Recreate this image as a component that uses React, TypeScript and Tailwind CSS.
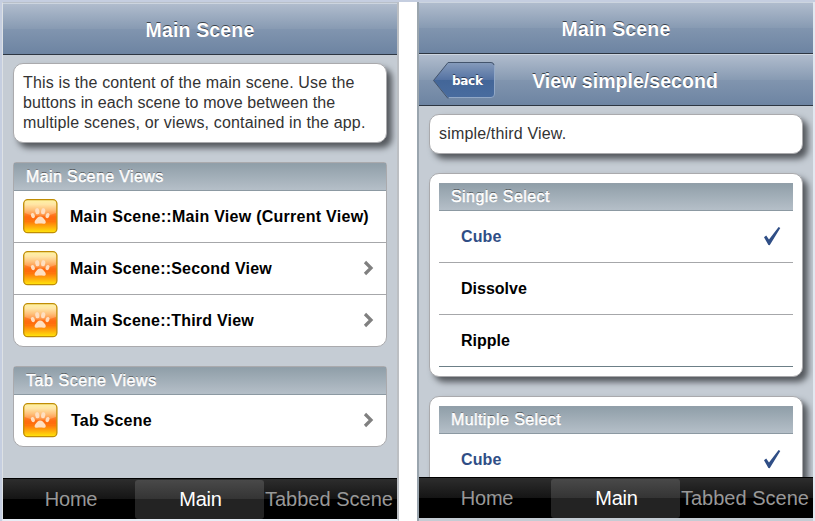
import React from "react";

function TitleBar({ title, tracking = "", back = false }: { title: string; tracking?: string; back?: boolean }) {
  return (
    <header
      className={`relative flex h-[52px] shrink-0 items-center justify-center border-t border-b border-t-[#cdd5df] border-b-[#2d3642] bg-[linear-gradient(#b0bccd_0%,#889bb3_49%,#8195af_50%,#6d84a2_100%)] pt-[3px] pb-[2px] ${back ? "pl-[18px]" : ""}`}
    >
      {back && (
        <svg className="absolute top-[6px] left-[13px]" width="64" height="40" viewBox="0 0 64 40">
          <defs>
            <linearGradient id="back" x1="0" y1="0" x2="0" y2="1">
              <stop offset="0" stopColor="#869bbb" />
              <stop offset=".49" stopColor="#5573a3" />
              <stop offset=".5" stopColor="#436698" />
              <stop offset="1" stopColor="#496c9f" />
            </linearGradient>
          </defs>
          <path d="M16 1.5H59Q62.500 1.500 62.500 5V33Q62.500 36.500 59 36.500H16L1.500 19.500Z" fill="url(#back)" />
          <path d="M62.500 5V33Q62.500 36.500 59 36.500H17" fill="none" stroke="#92a8c6" />
          <path d="M16 37.500L1.500 19.500L16 1.500H59Q61.500 1.500 62 4" fill="none" stroke="#43546c" />
        </svg>
      )}
      {back && (
        <span className="absolute top-[18px] left-[33px] font-['DejaVu_Sans',sans-serif] text-[12px] leading-[16px] font-bold tracking-[-0.3px] text-white [text-shadow:0_-1px_0_#30415d]">
          back
        </span>
      )}
      <h1 className={`pt-px text-[19.5px] leading-6 font-bold text-white [text-shadow:0_-1px_0_rgba(0,0,0,0.6)] ${tracking}`}>{title}</h1>
    </header>
  );
}

function Card({ children }: { children: React.ReactNode }) {
  return (
    <section className="shrink-0 rounded-[10px] border border-[#aaaaad] bg-white p-[9px] shadow-[5px_5px_6px_#54585d]">{children}</section>
  );
}

function GroupHeader({ title, tracking = "" }: { title: string; tracking?: string }) {
  return (
    <h2
      className={`h-7 border-t border-b border-t-[#929fa9] border-b-[#8c99a2] bg-[linear-gradient(#909fa9,#b5bfc8)] pl-3 text-[16px] leading-[26px] text-white [-webkit-text-stroke:0.5px_white] [text-shadow:0_-1px_0_rgba(0,0,0,0.6)] ${tracking}`}
    >
      {title}
    </h2>
  );
}

function Paw() {
  return (
    <svg className="ml-[9px] shrink-0" width="35" height="35" viewBox="0 0 35 35">
      <defs>
        <linearGradient id="amber" x1="0" y1="0" x2="0" y2="1">
          <stop offset="0" stopColor="#fff3a0" />
          <stop offset=".14" stopColor="#ffe6a6" />
          <stop offset=".3" stopColor="#ffc27c" />
          <stop offset=".45" stopColor="#ff984c" />
          <stop offset=".52" stopColor="#ff7416" />
          <stop offset=".66" stopColor="#ff760b" />
          <stop offset="1" stopColor="#ffe80c" />
        </linearGradient>
      </defs>
      <rect x=".7" y=".7" width="33.2" height="33" rx="4" fill="url(#amber)" stroke="#c08d05" strokeWidth="1.3" />
      <path d="M1.500 14Q17 21 33 14V21H1.500Z" fill="#ff680c" opacity=".6" />
      <g fill="#ffdfc0">
        <path d="M17.200 17.600C19.200 17.600 20.500 19.300 21.900 21C23.600 23.200 22.600 25.200 20.400 24.800C18.200 24.400 16.200 24.400 14 24.800C11.800 25.200 10.800 23.200 12.500 21C13.900 19.300 15.200 17.600 17.200 17.600Z" />
        <ellipse cx="14.300" cy="12.200" rx="2.100" ry="3.100" transform="rotate(-8 14.300 12.200)" />
        <ellipse cx="20.200" cy="12.200" rx="2.100" ry="3.100" transform="rotate(8 20.200 12.200)" />
        <ellipse cx="9.900" cy="16.600" rx="1.900" ry="2.700" transform="rotate(-22 9.900 16.600)" />
        <ellipse cx="24.500" cy="16.600" rx="1.900" ry="2.700" transform="rotate(22 24.500 16.600)" />
      </g>
    </svg>
  );
}

function Group({ title, tracking = "", items }: { title: string; tracking?: string; items: { label: string; arrow: boolean; style: string }[] }) {
  return (
    <section className="shrink-0 rounded-t-[3px] rounded-b-[10px] border border-[#aaaaad] bg-white">
      <GroupHeader title={title} tracking={tracking} />
      <ul>
        {items.map((it) => (
          <li key={it.label} className="flex h-[52px] items-center border-b border-[#a6a7aa] last:h-[51px] last:border-b-0">
            <Paw />
            <span className={`ml-3 flex-1 text-[16px] leading-5 font-bold whitespace-nowrap text-black ${it.style}`}>{it.label}</span>
            {it.arrow && (
              <svg className="mr-[12px] mb-[2px]" width="11" height="16" viewBox="0 0 11 16">
                <path d="M2 2L8 8L2 14" fill="none" stroke="#808080" strokeWidth="3.200" />
              </svg>
            )}
          </li>
        ))}
      </ul>
    </section>
  );
}

function SelectList({ title, tracking = "", items, checked }: { title: string; tracking?: string; items: string[]; checked: string }) {
  return (
    <Card>
      <GroupHeader title={title} tracking={tracking} />
      <ul>
        {items.map((label) => (
          <li key={label} className="flex h-[52px] items-center justify-between border-b border-[#a6a7aa] pr-3 pl-[22px] last:border-[#6c7f87]">
            <span className={`text-[16px] leading-5 font-bold ${label === checked ? "tracking-[0.1px] text-[#2f4e86]" : "text-black"}`}>{label}</span>
            {label === checked && (
              <svg className="mb-[2px]" width="18" height="20" viewBox="0 0 18 20">
                <path d="M1 11.200L3.200 9.500L6 13.500L15.600 .9L17.300 2.100L6.700 19.300L5.400 19Z" fill="#2f4e86" />
              </svg>
            )}
          </li>
        ))}
      </ul>
    </Card>
  );
}

function TabBar({ position }: { position: string }) {
  return (
    <nav
      className={`absolute inset-x-0 flex h-[41px] border-t border-black bg-[linear-gradient(#2d2d2d_0%,#151515_49%,#000_50%,#000_100%)] text-[20px] leading-[40px] text-[#989898] ${position}`}
    >
      <span className="w-[132px] pl-[4px] text-center tracking-[-0.2px]">Home</span>
      <span className="mt-px w-[129px] rounded-[3px] bg-[linear-gradient(#494949_0%,#343434_49%,#232323_50%,#232323_100%)] pl-[2px] text-center leading-[38px] tracking-[-0.2px] text-white">
        Main
      </span>
      <span className="flex-1 pl-px whitespace-nowrap">Tabbed Scene</span>
    </nav>
  );
}

export default function App() {
  return (
    <div className="flex h-[521px] w-[815px] overflow-hidden border-t-2 border-[#c5cee0] bg-white font-['Liberation_Sans',Arial,sans-serif]">
      <div className="w-[2px] bg-[#c5cee0]" />
      <div className="relative flex w-[397px] flex-col border-t border-r-2 border-b-2 border-l border-t-[#b9c0c9] border-r-[#bcbfc3] border-b-[#e8edf5] border-l-[#dde1e5] bg-[#c5ccd4]">
        <TitleBar title="Main Scene" tracking="tracking-[0.15px]" />
        <main className="flex flex-1 flex-col gap-[19px] overflow-hidden px-[10px] pt-[8px]">
          <Card>
            <p className="text-[16px] leading-5 whitespace-nowrap text-[#333]">
              <span className="tracking-[0.15px]">This is the content of the main scene. Use the</span>
              <br />
              <span className="tracking-[0.09px]">buttons in each scene to move between the</span>
              <br />
              <span className="tracking-[0.15px]">multiple scenes, or views, contained in the app.</span>
            </p>
          </Card>
          <Group
            title="Main Scene Views"
            tracking="tracking-[0.4px]"
            items={[
              { label: "Main Scene::Main View (Current View)", arrow: false, style: "tracking-[0.27px]" },
              { label: "Main Scene::Second View", arrow: true, style: "tracking-[0.21px]" },
              { label: "Main Scene::Third View", arrow: true, style: "tracking-[0.21px]" },
            ]}
          />
          <Group title="Tab Scene Views" tracking="tracking-[0.55px]" items={[{ label: "Tab Scene", arrow: true, style: "pl-px tracking-[0.22px]" }]} />
        </main>
        <TabBar position="top-[475px]" />
      </div>
      <div className="w-[18px] bg-white" />
      <div className="relative flex w-[396px] flex-col overflow-hidden border-l-2 border-l-[#9aa5ae] bg-[#c5ccd4]">
        <TitleBar title="Main Scene" tracking="tracking-[0.15px]" />
        <TitleBar title="View simple/second" tracking="tracking-[0.04px]" back />
        <main className="flex flex-1 flex-col gap-[19px] px-[10px] pt-[8px]">
          <Card>
            <p className="text-[16px] leading-5 tracking-[0.17px] text-[#333]">simple/third View.</p>
          </Card>
          <SelectList title="Single Select" tracking="tracking-[0.42px]" items={["Cube", "Dissolve", "Ripple"]} checked="Cube" />
          <SelectList title="Multiple Select" tracking="tracking-[0.4px]" items={["Cube"]} checked="Cube" />
        </main>
        <TabBar position="top-[475px]" />
      </div>
      <div className="flex-1 bg-[#e3e8f0]" />
    </div>
  );
}
